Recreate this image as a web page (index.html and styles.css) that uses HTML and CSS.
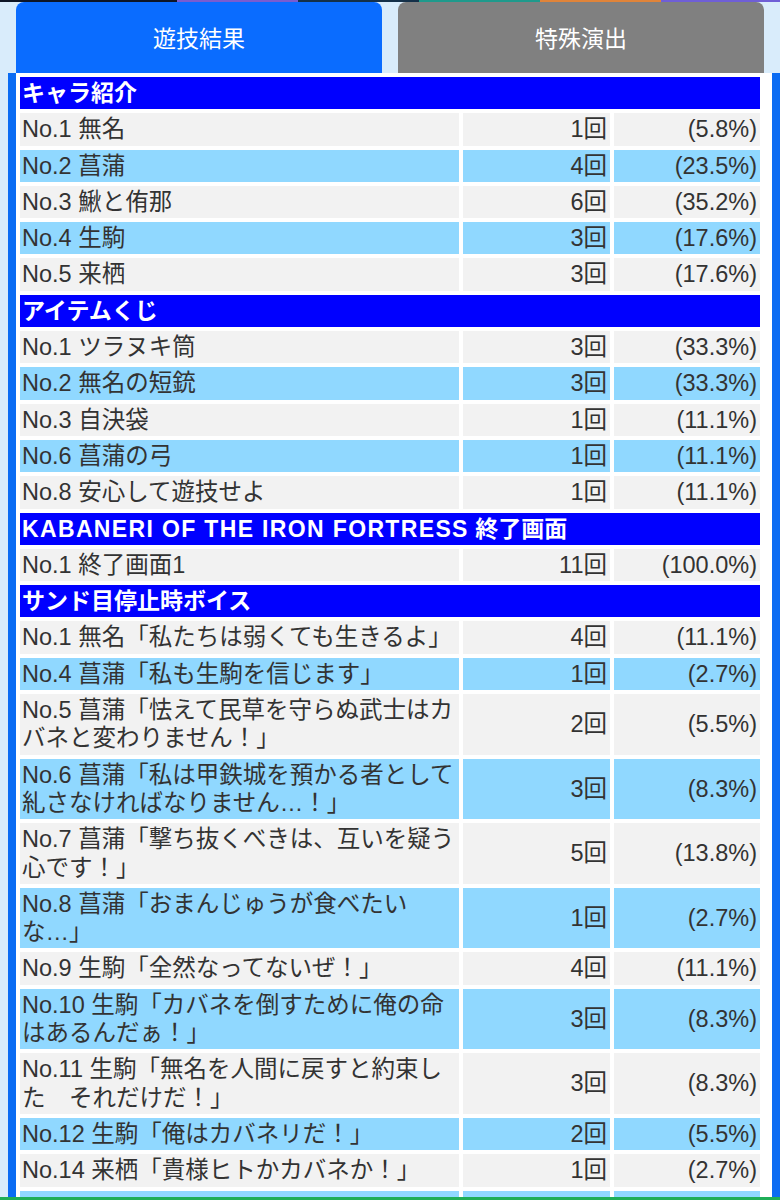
FILE: index.html
```html
<!DOCTYPE html>
<html lang="ja">
<head>
<meta charset="utf-8">
<title>遊技結果</title>
<link rel="stylesheet" href="styles.css">
</head>
<body>
<div class="stripe">
  <span class="s1"></span><span class="s2"></span><span class="s3"></span><span class="s4"></span><span class="s5"></span><span class="s6"></span>
</div>
<nav class="tabs">
  <div class="tab tab-active">遊技結果</div>
  <div class="tab tab-off">特殊演出</div>
</nav>
<main class="panel">
  <table class="stats">
    <colgroup><col class="c-name"><col class="c-count"><col class="c-pct"></colgroup>
    <tbody>
      <tr class="head"><th colspan="3">キャラ紹介</th></tr>
      <tr class="g"><td>No.1 無名</td><td class="num">1回</td><td class="num">(5.8%)</td></tr>
      <tr class="b"><td>No.2 菖蒲</td><td class="num">4回</td><td class="num">(23.5%)</td></tr>
      <tr class="g"><td>No.3 鰍と侑那</td><td class="num">6回</td><td class="num">(35.2%)</td></tr>
      <tr class="b"><td>No.4 生駒</td><td class="num">3回</td><td class="num">(17.6%)</td></tr>
      <tr class="g"><td>No.5 来栖</td><td class="num">3回</td><td class="num">(17.6%)</td></tr>

      <tr class="head"><th colspan="3">アイテムくじ</th></tr>
      <tr class="g"><td>No.1 ツラヌキ筒</td><td class="num">3回</td><td class="num">(33.3%)</td></tr>
      <tr class="b"><td>No.2 無名の短銃</td><td class="num">3回</td><td class="num">(33.3%)</td></tr>
      <tr class="g"><td>No.3 自決袋</td><td class="num">1回</td><td class="num">(11.1%)</td></tr>
      <tr class="b"><td>No.6 菖蒲の弓</td><td class="num">1回</td><td class="num">(11.1%)</td></tr>
      <tr class="g"><td>No.8 安心して遊技せよ</td><td class="num">1回</td><td class="num">(11.1%)</td></tr>

      <tr class="head"><th colspan="3"><span class="latin">KABANERI OF THE IRON FORTRESS</span> 終了画面</th></tr>
      <tr class="g"><td>No.1 終了画面1</td><td class="num">11回</td><td class="num">(100.0%)</td></tr>

      <tr class="head"><th colspan="3">サンド目停止時ボイス</th></tr>
      <tr class="g"><td>No.1 無名「私たちは弱くても生きるよ」</td><td class="num">4回</td><td class="num">(11.1%)</td></tr>
      <tr class="b"><td>No.4 菖蒲「私も生駒を信じます」</td><td class="num">1回</td><td class="num">(2.7%)</td></tr>
      <tr class="g"><td>No.5 菖蒲「怯えて民草を守らぬ武士はカバネと変わりません！」</td><td class="num">2回</td><td class="num">(5.5%)</td></tr>
      <tr class="b"><td>No.6 菖蒲「私は甲鉄城を預かる者として糺さなければなりません…！」</td><td class="num">3回</td><td class="num">(8.3%)</td></tr>
      <tr class="g"><td>No.7 菖蒲「撃ち抜くべきは、互いを疑う心です！」</td><td class="num">5回</td><td class="num">(13.8%)</td></tr>
      <tr class="b"><td>No.8 菖蒲「おまんじゅうが食べたいな…」</td><td class="num">1回</td><td class="num">(2.7%)</td></tr>
      <tr class="g"><td>No.9 生駒「全然なってないぜ！」</td><td class="num">4回</td><td class="num">(11.1%)</td></tr>
      <tr class="b"><td>No.10 生駒「カバネを倒すために俺の命はあるんだぁ！」</td><td class="num">3回</td><td class="num">(8.3%)</td></tr>
      <tr class="g"><td>No.11 生駒「無名を人間に戻すと約束した　それだけだ！」</td><td class="num">3回</td><td class="num">(8.3%)</td></tr>
      <tr class="b"><td>No.12 生駒「俺はカバネリだ！」</td><td class="num">2回</td><td class="num">(5.5%)</td></tr>
      <tr class="g"><td>No.14 来栖「貴様ヒトかカバネか！」</td><td class="num">1回</td><td class="num">(2.7%)</td></tr>
      <tr class="b"><td>&nbsp;</td><td class="num">&nbsp;</td><td class="num">&nbsp;</td></tr>
    </tbody>
  </table>
</main>
<div class="bottom-bar"></div>
</body>
</html>
```

FILE: styles.css
```css
html, body {
  margin: 0;
  padding: 0;
}
body {
  background: #d9ecfb;
  font-family: "Liberation Sans", "Noto Sans CJK JP", sans-serif;
  color: #333333;
  overflow: hidden;
}
.stripe {
  display: flex;
  height: 2px;
}
.stripe span { display: block; height: 2px; }
.s1 { width: 177px; background: #0d1526; }
.s2 { width: 121px; background: #7a5ccf; }
.s3 { width: 121px; background: #143049; }
.s4 { width: 121px; background: #1f9a8c; }
.s5 { width: 121px; background: #e0843a; }
.s6 { flex: 1; background: #6f5fd6; }

.tabs {
  display: flex;
  gap: 16px;
  padding: 0 16px;
  height: 71px;
}
.tab {
  flex: 1;
  border-radius: 8px 8px 0 0;
  color: #ffffff;
  font-size: 23px;
  display: flex;
  align-items: center;
  justify-content: center;
  padding-bottom: 2px;
  box-sizing: border-box;
}
.tab-active { background: #0a6cff; }
.tab-off { background: #808080; }

.panel {
  margin-left: 8px;
  border-left: 8px solid #0b6cf3;
  border-right: 8px solid #0b6cf3;
  padding-right: 8px;
  background: #ffffff;
  min-height: 1200px;
}
.stats {
  width: 100%;
  border-collapse: separate;
  border-spacing: 4px;
  table-layout: fixed;
  font-size: 23.5px;
  line-height: 28.3px;
}
.c-name { width: 439px; }
.c-count { width: 147px; }
.c-pct { width: 146px; }
.stats td, .stats th {
  padding: 2px 3px 2px 2px;
  vertical-align: middle;
}
.stats td:first-child { padding-right: 2px; }
.head th {
  background: #0000ff;
  color: #ffffff;
  text-align: left;
  font-weight: bold;
  font-size: 23px;
}
.latin { letter-spacing: 1.35px; }
.g td { background: #f2f2f2; }
.b td { background: #90d8ff; }
.num { text-align: right; }

.bottom-bar {
  position: fixed;
  left: 0;
  right: 0;
  bottom: 0;
  height: 3px;
  background: #1fae57;
}
```
